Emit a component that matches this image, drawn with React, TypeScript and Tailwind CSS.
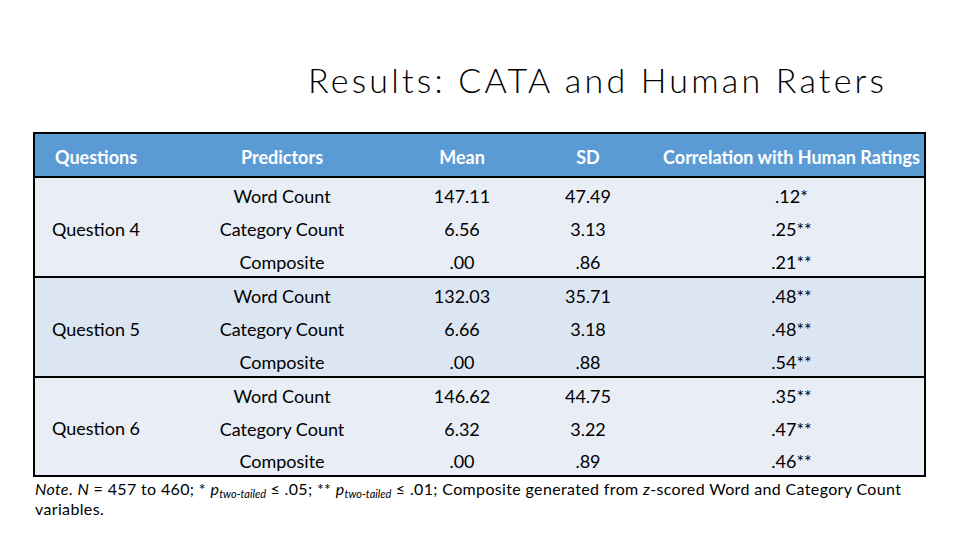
import React from 'react';

type Row = { predictor: string; mean: string; sd: string; corr: string; h: string };
type Group = { label: string; bg: string; rows: Row[] };

const groups: Group[] = [
  {
    label: 'Question 4',
    bg: 'bg-[#e9edf5]',
    rows: [
      { predictor: 'Word Count', mean: '147.11', sd: '47.49', corr: '.12*', h: 'h-[33px]' },
      { predictor: 'Category Count', mean: '6.56', sd: '3.13', corr: '.25**', h: 'h-[33px]' },
      { predictor: 'Composite', mean: '.00', sd: '.86', corr: '.21**', h: 'h-[32px]' },
    ],
  },
  {
    label: 'Question 5',
    bg: 'bg-[#dce6f2]',
    rows: [
      { predictor: 'Word Count', mean: '132.03', sd: '35.71', corr: '.48**', h: 'h-[33px]' },
      { predictor: 'Category Count', mean: '6.66', sd: '3.18', corr: '.48**', h: 'h-[33px]' },
      { predictor: 'Composite', mean: '.00', sd: '.88', corr: '.54**', h: 'h-[32px]' },
    ],
  },
  {
    label: 'Question 6',
    bg: 'bg-[#e9edf5]',
    rows: [
      { predictor: 'Word Count', mean: '146.62', sd: '44.75', corr: '.35**', h: 'h-[33px]' },
      { predictor: 'Category Count', mean: '6.32', sd: '3.22', corr: '.47**', h: 'h-[33px]' },
      { predictor: 'Composite', mean: '.00', sd: '.89', corr: '.46**', h: 'h-[31px]' },
    ],
  },
];

const cols = 'grid grid-cols-[122px_250px_110px_142px_265px]';

export default function App() {
  return (
    <div className="w-[960px] h-[540px] bg-white overflow-hidden font-['Lato',sans-serif] text-black">
      <div className="h-[132px] pl-[308px] pt-[56px]">
        <h1 className="text-[34px] font-light leading-[48px] tracking-[3.2px] whitespace-nowrap">
          Results: CATA and Human Raters
        </h1>
      </div>

      <div className="ml-[33px] w-[893px] border-2 border-black">
        <div className={`${cols} h-[44px] pt-[4px] items-center bg-[#5b9bd5] border-b-2 border-black text-white font-bold text-[18px]`}>
          <div className="text-center">Questions</div>
          <div className="text-center">Predictors</div>
          <div className="text-center">Mean</div>
          <div className="text-center">SD</div>
          <div className="text-center whitespace-nowrap">Correlation with Human Ratings</div>
        </div>

        {groups.map((g, gi) => (
          <div
            key={g.label}
            className={`${cols} ${g.bg} text-[18px] ${gi < groups.length - 1 ? 'border-b-2 border-black' : ''}`}
          >
            <div className="row-span-3 pt-[4px] flex items-center justify-center">{g.label}</div>
            {g.rows.map((r) => (
              <React.Fragment key={r.predictor}>
                <div className={`${r.h} pt-[4px] flex items-center justify-center`}>{r.predictor}</div>
                <div className={`${r.h} pt-[4px] flex items-center justify-center`}>{r.mean}</div>
                <div className={`${r.h} pt-[4px] flex items-center justify-center`}>{r.sd}</div>
                <div className={`${r.h} pt-[4px] flex items-center justify-center`}>{r.corr}</div>
              </React.Fragment>
            ))}
          </div>
        ))}
      </div>

      <p className="ml-[35px] w-[885px] text-[16px] leading-[20px] tracking-[0.35px] mt-[2px]">
        <i>Note</i>. <i>N</i> = 457 to 460; * <i>p</i>
        <sub className="italic text-[11px] tracking-normal">two-tailed</sub> ≤ .05; ** <i>p</i>
        <sub className="italic text-[11px] tracking-normal">two-tailed</sub> ≤ .01; Composite generated from <i>z</i>-scored
        Word and Category Count variables.
      </p>
    </div>
  );
}
